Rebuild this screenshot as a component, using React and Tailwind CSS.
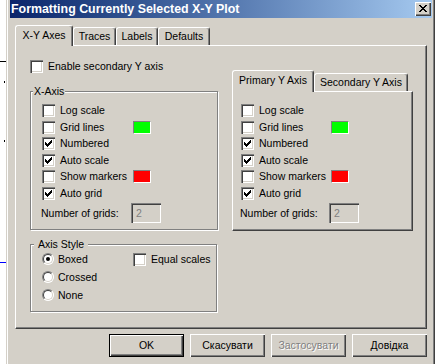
import React from "react";

function CheckBox({ checked }) {
  return (
    <span className="relative block w-[13px] h-[13px] shrink-0 bg-white shadow-[inset_1px_1px_0_#808080,inset_2px_2px_0_#404040,inset_-1px_-1px_0_#ffffff,inset_-2px_-2px_0_#d4d0c8]">
      {checked && (
        <svg className="absolute left-0 top-0" width="13" height="13" viewBox="0 0 13 13" shapeRendering="crispEdges">
          <path
            d="M3 5h1v3H3z M4 6h1v3H4z M5 7h1v3H5z M6 6h1v3H6z M7 5h1v3H7z M8 4h1v3H8z M9 3h1v3H9z"
            fill="#000"
          />
        </svg>
      )}
    </span>
  );
}

function Radio({ checked }) {
  return (
    <span className="relative block w-[12px] h-[12px] shrink-0 rounded-full bg-white border border-t-[#808080] border-l-[#808080] border-r-white border-b-white">
      <span className="absolute inset-0 rounded-full border border-t-[#404040] border-l-[#404040] border-r-[#d4d0c8] border-b-[#d4d0c8]" />
      {checked && <span className="absolute left-[3px] top-[3px] w-[4px] h-[4px] rounded-full bg-black" />}
    </span>
  );
}

function CheckRow({ label, checked, color, col }) {
  return (
    <div className="flex items-center h-[13px]">
      <div className={`flex items-center gap-[5px] ${col}`}>
        <CheckBox checked={checked} />
        <span className="leading-[13px] whitespace-nowrap">{label}</span>
      </div>
      {color && <span className={`block w-[18px] h-[13px] border border-t-[#808080] border-l-[#808080] border-r-white border-b-white ${color}`} />}
    </div>
  );
}

function NumberRow({ col }) {
  return (
    <div className="flex items-center h-[20px]">
      <span className={`leading-[13px] whitespace-nowrap -ml-[1px] ${col}`}>Number of grids:</span>
      <span className="-ml-[1px] block w-[30px] h-[20px] bg-[#d4d0c8] pl-[5px] text-[#808080] leading-[20px] shadow-[inset_1px_1px_0_#808080,inset_2px_2px_0_#404040,inset_-1px_-1px_0_#ffffff,inset_-2px_-2px_0_#d4d0c8]">
        2
      </span>
    </div>
  );
}

function AxisRows({ col }) {
  return (
    <div className="flex flex-col gap-[3.5px]">
      <CheckRow label="Log scale" col={col} />
      <CheckRow label="Grid lines" col={col} color="bg-[#00ff00]" />
      <CheckRow label="Numbered" checked col={col} />
      <CheckRow label="Auto scale" checked col={col} />
      <CheckRow label="Show markers" col={col} color="bg-[#ff0000]" />
      <CheckRow label="Auto grid" checked col={col} />
      <NumberRow col={col} />
    </div>
  );
}

function Group({ label, labelClass, className, children }) {
  return (
    <div className={`relative border border-[#808080] shadow-[inset_1px_1px_0_#ffffff,1px_1px_0_#ffffff] ${className}`}>
      <span className={`absolute top-[-7px] bg-[#d4d0c8] leading-[13px] whitespace-nowrap ${labelClass}`}>{label}</span>
      {children}
    </div>
  );
}

function Tab({ label, selected, w, h }) {
  if (selected) {
    return (
      <div
        className={`relative z-10 ${w} ${h} bg-[#d4d0c8] border-l border-t border-white border-r border-r-[#404040] rounded-tl-[3px] rounded-tr-[3px] shadow-[inset_-1px_0_0_#808080] flex justify-center pt-[3px] leading-[13px] whitespace-nowrap`}
      >
        {label}
      </div>
    );
  }
  return (
    <div
      className={`relative ${w} h-[18px] mb-[1px] bg-[#d4d0c8] border-l border-t border-white border-r border-r-[#404040] rounded-tl-[3px] rounded-tr-[3px] shadow-[inset_-1px_0_0_#808080] flex justify-center pt-[2px] leading-[13px] whitespace-nowrap`}
    >
      {label}
    </div>
  );
}

function Button({ children, def, disabled }) {
  return (
    <div
      className={`w-[75px] h-[23px] flex items-center justify-center bg-[#d4d0c8] font-normal ${
        def
          ? "border border-black shadow-[inset_1px_1px_0_#ffffff,inset_-1px_-1px_0_#404040,inset_-2px_-2px_0_#808080]"
          : "shadow-[inset_1px_1px_0_#ffffff,inset_-1px_-1px_0_#404040,inset_-2px_-2px_0_#808080]"
      } ${disabled ? "text-[#808080] [text-shadow:1px_1px_0_#ffffff]" : "text-black"}`}
    >
      {children}
    </div>
  );
}

export default function App() {
  return (
    <div className="w-[445px] h-[364px] bg-white overflow-hidden flex text-[10.5px] text-black font-['Liberation_Sans',Arial,sans-serif]">
      {/* background strip */}
      <div className="relative w-[6px] h-full shrink-0 bg-white">
        <span className="absolute left-0 top-[61px] w-[6px] h-[1px] bg-black" />
        <span className="absolute left-[4px] top-[81px] w-[1px] h-[2px] bg-black" />
        <span className="absolute left-[4px] top-[140px] w-[1px] h-[2px] bg-black" />
        <span className="absolute left-0 top-[262px] w-[6px] h-[1px] bg-[#0000ff]" />
      </div>

      {/* window */}
      <div className="w-[429px] h-full shrink-0 bg-[#d4d0c8] border-l border-l-[#d4d0c8] border-r border-r-[#404040] pl-[3px] pr-[2px] shadow-[inset_1px_0_0_#ffffff,inset_-1px_0_0_#808080] flex flex-col">
        {/* title bar */}
        <div className="h-[18px] w-[422px] shrink-0 flex items-center justify-between bg-gradient-to-r from-[#0a246a] to-[#a6caf0] pl-[1px] pr-[1px]">
          <span className="text-white font-bold text-[12.4px] leading-[14px] -mt-[1px] whitespace-nowrap">
            Formatting Currently Selected X-Y Plot
          </span>
          <span className="relative w-[16px] h-[14px] bg-[#d4d0c8] shadow-[inset_1px_1px_0_#ffffff,inset_-1px_-1px_0_#404040,inset_-2px_-2px_0_#808080]">
            <svg className="absolute left-[4px] top-[3px]" width="8" height="7" viewBox="0 0 8 7" shapeRendering="crispEdges">
              <path
                d="M0 0h2v1H0z M6 0h2v1H6z M1 1h2v1H1z M5 1h2v1H5z M2 2h4v1H2z M3 3h2v1H3z M2 4h4v1H2z M1 5h2v1H1z M5 5h2v1H5z M0 6h2v1H0z M6 6h2v1H6z"
                fill="#000"
              />
            </svg>
          </span>
        </div>

        {/* tabs */}
        <div className="mt-[7px] ml-[5px] flex items-end -mb-[1px] relative z-10">
          <Tab label="X-Y Axes" selected w="w-[58px]" h="h-[21px]" />
          <Tab label="Traces" w="w-[43px]" />
          <Tab label="Labels" w="w-[42px]" />
          <Tab label="Defaults" w="w-[52px]" />
        </div>

        {/* tab panel */}
        <div className="ml-[5px] w-[412px] h-[284px] shrink-0 border-t border-l border-white border-r border-b border-r-[#404040] border-b-[#404040] shadow-[inset_-1px_-1px_0_#808080] pt-[14px] pl-[14px] flex gap-[14px]">
          {/* left column */}
          <div className="w-[188px] flex flex-col">
            <div className="flex items-center gap-[5px] h-[13px]">
              <CheckBox />
              <span className="leading-[13px]">Enable secondary Y axis</span>
            </div>

            <Group label="X-Axis" labelClass="left-[2px] px-[1px]" className="mt-[18px] h-[139px] pt-[12px] pl-[11px]">
              <AxisRows col="w-[91px]" />
            </Group>

            <Group label="Axis Style" labelClass="left-[3px] px-[4px]" className="mt-[14px] w-[187px] h-[68px] pt-[8px] pl-[11px]">
              <div className="flex">
                <div className="w-[91px] flex flex-col gap-[6px]">
                  <div className="flex items-center gap-[4px] h-[12px]">
                    <Radio checked />
                    <span className="leading-[13px]">Boxed</span>
                  </div>
                  <div className="flex items-center gap-[4px] h-[12px]">
                    <Radio />
                    <span className="leading-[13px]">Crossed</span>
                  </div>
                  <div className="flex items-center gap-[4px] h-[12px]">
                    <Radio />
                    <span className="leading-[13px]">None</span>
                  </div>
                </div>
                <div className="flex items-center gap-[5px] h-[13px]">
                  <CheckBox />
                  <span className="leading-[13px]">Equal scales</span>
                </div>
              </div>
            </Group>
          </div>

          {/* right column */}
          <div className="w-[181px] pt-[10px] flex flex-col">
            <div className="flex items-end -mb-[1px] relative z-10">
              <Tab label="Primary Y Axis" selected w="w-[82px]" h="h-[22px]" />
              <Tab label="Secondary Y Axis" w="w-[94px]" />
            </div>
            <div className="h-[140px] border-t border-l border-white border-r border-b border-r-[#404040] border-b-[#404040] shadow-[inset_-1px_-1px_0_#808080] pt-[12px] pl-[8px]">
              <AxisRows col="w-[90px]" />
            </div>
          </div>
        </div>

        {/* buttons */}
        <div className="mt-[5px] ml-[5px] w-[412px] flex justify-end gap-[6px]">
          <Button def>OK</Button>
          <Button>Скасувати</Button>
          <Button disabled>Застосувати</Button>
          <Button>Довідка</Button>
        </div>
      </div>

      <div className="flex-1 h-full bg-white" />
    </div>
  );
}
